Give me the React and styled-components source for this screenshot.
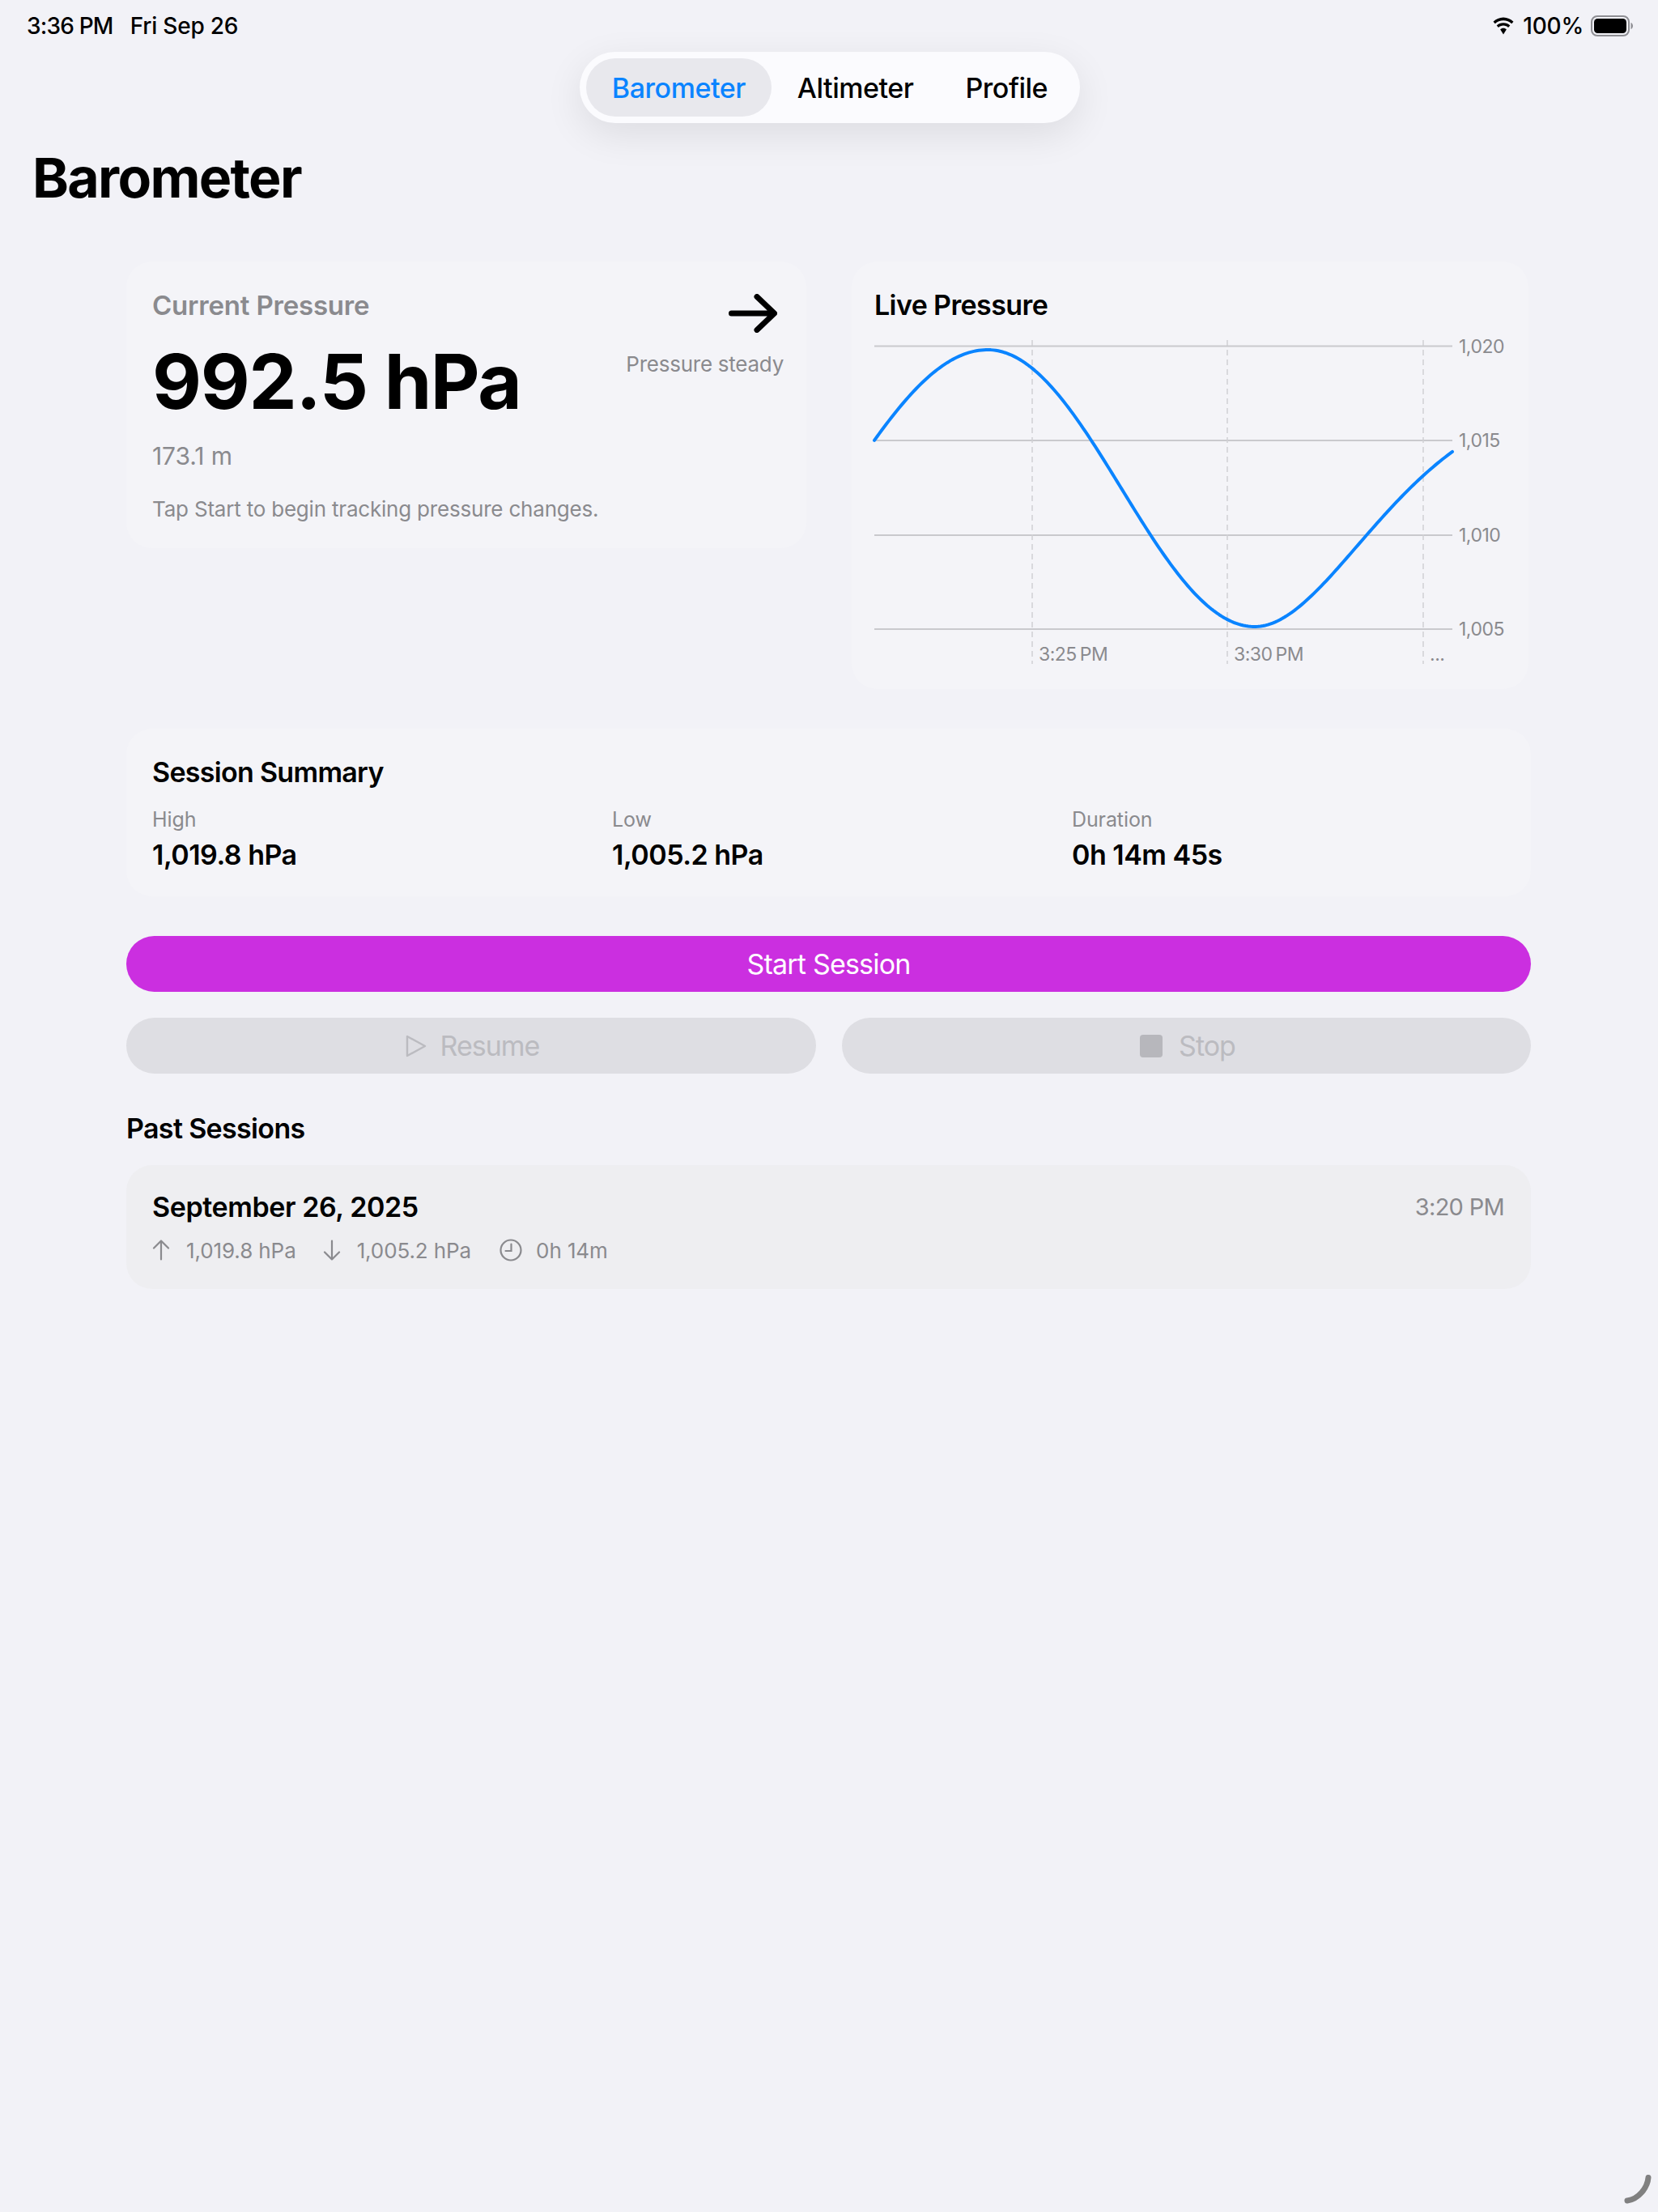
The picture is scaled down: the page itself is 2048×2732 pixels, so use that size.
import React from "react";
import styled, { createGlobalStyle } from "styled-components";

const Global = createGlobalStyle`
  html, body { margin: 0; padding: 0; background: #f2f2f7; }
  body { font-family: Inter, "Liberation Sans", sans-serif; color: #000; -webkit-font-smoothing: antialiased; }
`;

const GRAY = "#8a8a8e";
const Page = styled.div`position: relative; width: 2048px; height: 2732px; background: #f2f2f7; overflow: hidden;`;
const StatusBar = styled.div`display: flex; justify-content: space-between; align-items: center; height: 64px; padding: 0 31px 0 33px; box-sizing: border-box; font-size: 28px; font-weight: 500; letter-spacing: -0.2px;`;
const StatusGroup = styled.div`display: flex; align-items: center; gap: ${p => p.$gap}px;`;
const StatusTime = styled.span`letter-spacing: -0.8px;`;
const TabsRow = styled.div`display: flex; justify-content: center;`;
const Tabs = styled.div`display: flex; margin-right: -2px; padding: 8px; height: 88px; box-sizing: border-box; border-radius: 44px; background: #fbfbfe; box-shadow: 0 14px 48px rgba(0,0,0,.09);`;
const Tab = styled.div`display: flex; align-items: center; padding: 0 32px; border-radius: 36px; font-size: 34px; font-weight: 500; letter-spacing: -0.47px; color: ${p => p.$active ? "#0a84ff" : "#000"}; background: ${p => p.$active ? "#e8e8ed" : "transparent"};`;
const Title = styled.h1`margin: 26px 0 0 40px; height: 82px; line-height: 82px; font-size: 68px; font-weight: 700; letter-spacing: -1.7px;`;
const Content = styled.div`display: flex; flex-direction: column; width: 1735px; margin: 0 0 0 156px;`;
const TopGrid = styled.div`display: grid; grid-template-columns: 840px 836px; column-gap: 56px; align-items: start; margin-top: 63px;`;
const Card = styled.section`background: #f4f4f8; border-radius: 32px; box-sizing: border-box;`;
const PressureCard = styled(Card)`display: flex; justify-content: space-between; height: 354px; padding: 34px 28px 0 32px;`;
const PressureMain = styled.div`display: flex; flex-direction: column; white-space: nowrap;`;
const CurrentLabel = styled.div`font-size: 33px; line-height: 40px; font-weight: 600; letter-spacing: -0.2px; color: ${GRAY};`;
const BigValue = styled.div`font-size: 94px; line-height: 116px; font-weight: 700; letter-spacing: -1.3px; margin-top: 16px;`;
const Altitude = styled.div`font-size: 30px; line-height: 36px; color: ${GRAY}; margin-top: 16px; letter-spacing: -0.1px;`;
const Hint = styled.div`font-size: 26px; line-height: 34px; color: ${GRAY}; margin-top: 31px; letter-spacing: -0.2px;`;
const Trend = styled.div`display: flex; flex-direction: column; align-items: flex-end; flex-shrink: 0; white-space: nowrap;`;
const TrendArrow = styled.svg`display: block; margin: 6px 8px 0 0;`;
const TrendText = styled.div`font-size: 26px; line-height: 32px; color: ${GRAY}; margin-top: 23px; letter-spacing: -0.25px;`;
const LiveCard = styled(Card)`height: 528px; padding: 34px 0 0 28px;`;
const CardTitle = styled.h2`margin: 0; font-size: 34px; line-height: 40px; font-weight: 600; letter-spacing: -0.6px;`;
const ChartSvg = styled.svg`display: block; margin: 18px 0 0 0; overflow: visible;`;
const AxisText = styled.text`font-family: Inter, sans-serif; font-size: 23px; fill: ${GRAY}; letter-spacing: -0.5px; word-spacing: -2px;`;
const SummaryCard = styled(Card)`margin-top: 49px; height: 207px; padding: 34px 32px 0;`;
const SummaryTitle = styled(CardTitle)`letter-spacing: -0.7px;`;
const SummaryGrid = styled.div`display: grid; grid-template-columns: repeat(3, 568px); margin-top: 23px;`;
const Stat = styled.div`display: flex; flex-direction: column;`;
const StatLabel = styled.div`font-size: 25px; line-height: 30px; color: ${GRAY}; letter-spacing: -0.1px;`;
const StatValue = styled.div`font-size: 34px; line-height: 40px; font-weight: 600; letter-spacing: -0.5px; margin-top: 9px;`;
const StartButton = styled.button`display: block; width: 100%; height: 69px; margin-top: 49px; border: 0; border-radius: 35px; padding: 0; background: #cb2fe0; color: #fff; font: 400 34px Inter, sans-serif; letter-spacing: -0.8px;`;
const ButtonRow = styled.div`display: grid; grid-template-columns: 852px 851px; gap: 32px; margin-top: 32px;`;
const GhostButton = styled.button`display: flex; align-items: center; justify-content: center; gap: ${p => p.$gap}px; height: 69px; border: 0; border-radius: 35px; padding: 0 0 0 3px; background: #dedee3; color: #bbbbc0; font: 400 34px Inter, sans-serif; letter-spacing: -1px;`;
const SectionTitle = styled.h2`margin: 48px 0 0; font-size: 34px; line-height: 40px; font-weight: 600; letter-spacing: -0.65px;`;
const SessionCard = styled(Card)`display: flex; justify-content: space-between; height: 153px; margin-top: 25px; padding: 30px 33px 0 32px; background: #eeeef1;`;
const SessionMain = styled.div`display: flex; flex-direction: column;`;
const SessionDate = styled.div`font-size: 34px; line-height: 44px; font-weight: 600; letter-spacing: -0.4px;`;
const SessionMeta = styled.div`display: flex; align-items: center; height: 34px; margin-top: 14px; font-size: 26px; color: ${GRAY}; letter-spacing: -0.1px;`;
const MetaItem = styled.span`display: flex; align-items: center; gap: ${p => p.$gap}px; margin-right: ${p => p.$mr}px;`;
const SessionTime = styled.div`font-size: 29px; line-height: 44px; color: ${GRAY}; letter-spacing: -0.7px;`;
const Corner = styled.svg`position: absolute; right: 0; bottom: 0;`;

// Curve: three cosine arcs fitted to the reference, in chart coordinates (origin 1080,415).
const curveY = x => {
  const mid = 603, amp = 171;
  if (x < 1220) return mid - amp * Math.cos(0.0087 * (x - 1220));
  if (x < 1550) return mid - amp * Math.cos((Math.PI * (x - 1220)) / 330);
  const dx = x - 1550;
  return mid + amp * Math.cos(0.01063 * dx - 1.27e-5 * dx * dx);
};
const samples = [];
for (let x = 1080; x <= 1795; x += 3) samples.push(`${x - 1080},${(curveY(x) - 415).toFixed(2)}`);
const curve = `M${samples.join("L")}`;

const yAxis = [["1,020", 12.5], ["1,015", 129], ["1,010", 246], ["1,005", 362]];
const xAxis = [[195, "3:25 PM"], [436, "3:30 PM"], [678, "..."]];

const Wifi = () => (
  <svg width="30" height="22" viewBox="0 0 30 22" fill="#000">
    <path d="M15 4.200c3.900 0 7.500 1.500 10.200 4l2.300-2.400C24.100 2.600 19.800.5 15 .5S5.900 2.600 2.500 5.800l2.300 2.400c2.700-2.500 6.300-4 10.200-4z" />
    <path d="M15 10.600c2.300 0 4.400.9 6 2.300l2.300-2.400C21.100 8.500 18.200 7.300 15 7.300s-6.100 1.200-8.300 3.200l2.300 2.400c1.600-1.400 3.700-2.300 6-2.300z" />
    <path d="M15 13.800c-1.500 0-2.900.6-3.900 1.500L15 21.500l3.900-6.200c-1-.9-2.400-1.500-3.900-1.500z" />
  </svg>
);
const Battery = () => (
  <svg width="52" height="26" viewBox="0 0 52 26">
    <rect x="1" y="1" width="46" height="24" rx="7" fill="none" stroke="#8e8e93" strokeWidth="2" />
    <rect x="4" y="4" width="40" height="18" rx="4.500" fill="#000" />
    <path d="M49.500 9v8c1.500-.5 2.500-2.200 2.500-4s-1-3.500-2.500-4z" fill="#8e8e93" />
  </svg>
);
const Play = () => (
  <svg width="26" height="28" viewBox="0 0 26 28" fill="none" stroke="#bbbbc0" strokeWidth="2.400" strokeLinejoin="round">
    <path d="M2 2v24l22-12z" />
  </svg>
);
const StopIcon = () => (
  <svg width="28" height="28" viewBox="0 0 28 28"><rect width="28" height="28" rx="4" fill="#b7b7bc" /></svg>
);
const Clock = () => (
  <svg width="28" height="28" viewBox="0 0 28 28" fill="none" stroke={GRAY} strokeWidth="2.200" strokeLinecap="round">
    <circle cx="14" cy="14" r="12.500" /><path d="M14.500 6.500V15H7.500" />
  </svg>
);
const MetaArrow = ({ down }) => (
  <svg width="22" height="26" viewBox="0 0 22 26" fill="none" stroke={GRAY} strokeWidth="2.200" strokeLinecap="round" strokeLinejoin="round">
    <path d={down ? "M11 1.500V24.500M2 15.500L11 24.500L20 15.500" : "M11 24.500V1.500M2 10.500L11 1.500L20 10.500"} />
  </svg>
);

export default function App() {
  return (
    <Page>
      <Global />
      <StatusBar>
        <StatusGroup $gap={21}><StatusTime>3:36 PM</StatusTime><span>Fri Sep 26</span></StatusGroup>
        <StatusGroup $gap={9}><Wifi /><span>100%</span><Battery /></StatusGroup>
      </StatusBar>
      <TabsRow>
        <Tabs>
          <Tab $active>Barometer</Tab>
          <Tab>Altimeter</Tab>
          <Tab>Profile</Tab>
        </Tabs>
      </TabsRow>
      <Title>Barometer</Title>
      <Content>
        <TopGrid>
          <PressureCard>
            <PressureMain>
              <CurrentLabel>Current Pressure</CurrentLabel>
              <BigValue>992.5 hPa</BigValue>
              <Altitude>173.1 m</Altitude>
              <Hint>Tap Start to begin tracking pressure changes.</Hint>
            </PressureMain>
            <Trend>
              <TrendArrow width="60" height="48" viewBox="0 0 60 48" fill="none" stroke="#000" strokeWidth="7" strokeLinecap="round" strokeLinejoin="round">
                <path d="M3.500 24H56M35 3.500L56.500 24L35 44.500" />
              </TrendArrow>
              <TrendText>Pressure steady</TrendText>
            </Trend>
          </PressureCard>
          <LiveCard>
            <CardTitle>Live Pressure</CardTitle>
            <ChartSvg width="790" height="410" viewBox="0 0 790 410">
              {yAxis.map(([label, y]) => (
                <g key={label}>
                  <line x1="0" x2="714" y1={y} y2={y} stroke="#c9c9cd" strokeWidth="2" />
                  <AxisText x="722" y={y + 8}>{label}</AxisText>
                </g>
              ))}
              {xAxis.map(([x, label]) => (
                <g key={x}>
                  <line x1={x} x2={x} y1="5" y2="405" stroke="#cfcfd3" strokeWidth="1.500" strokeDasharray="7 5" />
                  <AxisText x={x + 8} y="401">{label}</AxisText>
                </g>
              ))}
              <path d={curve} fill="none" stroke="#0a84ff" strokeWidth="4" strokeLinecap="round" strokeLinejoin="round" />
            </ChartSvg>
          </LiveCard>
        </TopGrid>
        <SummaryCard>
          <SummaryTitle>Session Summary</SummaryTitle>
          <SummaryGrid>
            <Stat><StatLabel>High</StatLabel><StatValue>1,019.8 hPa</StatValue></Stat>
            <Stat><StatLabel>Low</StatLabel><StatValue>1,005.2 hPa</StatValue></Stat>
            <Stat><StatLabel>Duration</StatLabel><StatValue>0h 14m 45s</StatValue></Stat>
          </SummaryGrid>
        </SummaryCard>
        <StartButton>Start Session</StartButton>
        <ButtonRow>
          <GhostButton $gap={17}><Play />Resume</GhostButton>
          <GhostButton $gap={20}><StopIcon />Stop</GhostButton>
        </ButtonRow>
        <SectionTitle>Past Sessions</SectionTitle>
        <SessionCard>
          <SessionMain>
            <SessionDate>September 26, 2025</SessionDate>
            <SessionMeta>
              <MetaItem $gap={20} $mr={33}><MetaArrow />1,019.8 hPa</MetaItem>
              <MetaItem $gap={20} $mr={35}><MetaArrow down />1,005.2 hPa</MetaItem>
              <MetaItem $gap={17} $mr={0}><Clock />0h 14m</MetaItem>
            </SessionMeta>
          </SessionMain>
          <SessionTime>3:20 PM</SessionTime>
        </SessionCard>
      </Content>
      <Corner width="48" height="46" viewBox="0 0 48 46" fill="none">
        <path d="M36 3.500C35 16 24 30 10 32" stroke="#808080" strokeWidth="7" strokeLinecap="round" />
      </Corner>
    </Page>
  );
}
